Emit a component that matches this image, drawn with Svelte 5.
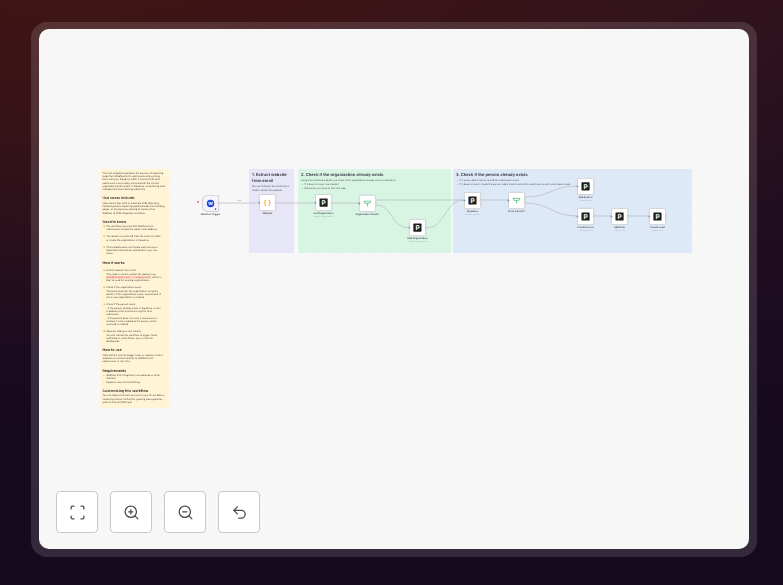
<script lang="ts">
	// canvas zoom of the flow view, coordinates below are in screen px
	const S = 0.17;
	const OX = 39;
	const OY = 29;

	const groups = [
		{
			cls: 'purple',
			x: 249,
			w: 45,
			title: '1. Extract website from email',
			intro: 'We use final part the email into a field to extract the website.',
			items: []
		},
		{
			cls: 'green',
			x: 298,
			w: 153,
			title: '2. Check if the organization already exists',
			intro: 'Using the extracted website, we check if the organization already exists in Pipedrive.',
			items: ['If it does not exist, we create it.', 'Otherwise, we move to the next step.']
		},
		{
			cls: 'blue',
			x: 453,
			w: 239,
			title: '3. Check if the person already exists',
			intro: '',
			items: [
				'If it exists, add a note to record the submission event.',
				'If it does not exist, create the person, add a note to record the submission event, and create a lead.'
			]
		}
	];

	const nodes = [
		{ x: 202, y: 195, kind: 'webflow', label: 'Webflow Trigger', sub: '' },
		{ x: 259, y: 194, kind: 'code', label: 'Website', sub: '' },
		{ x: 315, y: 194, kind: 'pipe', label: 'Get Organization', sub: 'search: organization' },
		{ x: 359, y: 195, kind: 'if', label: 'Organization Exists?', sub: '' },
		{ x: 409, y: 219, kind: 'pipe', label: 'Add Organization', sub: 'create: organization' },
		{ x: 464, y: 192, kind: 'pipe', label: 'Pipedrive', sub: 'search: person' },
		{ x: 508, y: 192, kind: 'if', label: 'Person Exists?', sub: '' },
		{ x: 577, y: 178, kind: 'pipe', label: 'Add Deals 2', sub: 'create: note' },
		{ x: 577, y: 208, kind: 'pipe', label: 'Create Person', sub: 'create: person' },
		{ x: 611, y: 208, kind: 'pipe', label: 'Add Note', sub: 'create: note' },
		{ x: 649, y: 208, kind: 'pipe', label: 'Create Lead', sub: 'create: lead' }
	];

	const edges = [
		'M219 203 H259',
		'M276 203 H315',
		'M332 203 H359',
		'M376 200 C400 200 440 200 464 200',
		'M376 205 C394 205 390 228 409 228',
		'M426 228 C446 228 444 200 464 200',
		'M481 200 H508',
		'M525 197 C550 197 552 186 577 186',
		'M525 203 C550 203 552 216 577 216',
		'M594 216 H611',
		'M628 216 H649'
	];

	const flowX = (x: number) => (x - OX) / S;
	const flowY = (y: number) => (y - OY) / S;
</script>

<div class="page">
	<div class="frame">
		<div class="canvas">
			<div class="flow">
				<div class="sticky">
					<p>This n8n template automates the process of capturing leads from Webflow form submissions and syncing them with your Pipedrive CRM. It ensures that each submission is accurately enriched with the correct organization and contact in Pipedrive, streamlining lead management and matching lead entry.</p>
					<h2>Use cases include:</h2>
					<p>Sales teams that want to automate CRM data entry, marketing teams capturing qualified leads from landing pages, or any business looking to improve their Webflow to CRM integration workflow.</p>
					<h2>Good to know</h2>
					<ol>
						<li>The workflow assumes that Webflow form submissions include the lead's email address.</li>
						<li>The domain is extracted from the email to match or create the organization in Pipedrive.</li>
						<li>This template does not handle lead scoring or duplication and can be extended for your use cases.</li>
					</ol>
					<h2>How it works</h2>
					<ol class="works">
						<li>Extract website from email<br />This code is used to extract the domain (e.g. <code>name@company.com → company.com</code>), which is later to used for existing organizations.</li>
						<li>Check if the organization exists<br />This block looks for the organization using the domain. If the organization exists, we proceed. If not, a new organization is created.</li>
						<li>Check if the person exists<br />- If the person already exists in Pipedrive, a note is added to their activities to log the form submission.<br />- If the person does not exist, a new person is created, a note is added to the person, and a new lead is created.</li>
						<li>Optional: add your own actions<br />You can extend this workflow to trigger Slack notifications, email follow-ups, or internal dashboards.</li>
					</ol>
					<h2>How to use</h2>
					<p>Start with the manual trigger node, or replace it with a webhook to connect directly to Webflow form submissions in real-time.</p>
					<h2>Requirements</h2>
					<ul>
						<li>Webflow form integration (via webhook or other method)</li>
						<li>Pipedrive account and API key</li>
					</ul>
					<h2>Customising this workflow</h2>
					<p>You can add enrichment services to your fill out data or conduct priorities. Perfect for growing sales pipelines without manual CRM input.</p>
				</div>

				{#each groups as g}
					<div class="group {g.cls}" style="left: {flowX(g.x)}px; width: {g.w / S}px">
						<h3>{g.title}</h3>
						{#if g.intro}<p>{g.intro}</p>{/if}
						{#if g.items.length}
							<ul>
								{#each g.items as item}<li>{item}</li>{/each}
							</ul>
						{/if}
					</div>
				{/each}

				<svg class="edges" viewBox="39 29 710 520" aria-hidden="true">
					{#each edges as d}
						<path {d} />
					{/each}
					<text class="edge-tag" x="239" y="201" text-anchor="middle">1 item</text>
					<text class="star" x="196.5" y="205">*</text>
				</svg>

				{#each nodes as n}
					<div class="node {n.kind}" style="left: {flowX(n.x)}px; top: {flowY(n.y)}px">
						<div class="box">
							{#if n.kind !== 'webflow'}<span class="port in"></span>{/if}
							<span class="port out"></span>
							{#if n.kind === 'pipe'}
								<span class="pipe-logo">P</span>
							{:else if n.kind === 'code'}
								<span class="braces">{'{ }'}</span>
							{:else if n.kind === 'if'}
								<svg class="if-icon" viewBox="0 0 10 8" aria-hidden="true">
									<path d="M1 1.5 H9 L7.6 3.8 H2.4 Z M5 3.8 V7.5" />
								</svg>
							{:else}
								<span class="wf-logo">w</span>
								<span class="wf-dot"></span>
							{/if}
						</div>
						<span class="label">{n.label}</span>
						{#if n.sub}<span class="sub">{n.sub}</span>{/if}
					</div>
				{/each}
			</div>

			<div class="controls">
				<button aria-label="Fit view">
					<svg viewBox="0 0 24 24"><path d="M7 3H5a2 2 0 0 0-2 2v2M21 7V5a2 2 0 0 0-2-2h-2M3 17v2a2 2 0 0 0 2 2h2M17 21h2a2 2 0 0 0 2-2v-2" /></svg>
				</button>
				<button aria-label="Zoom in">
					<svg viewBox="0 0 24 24"><circle cx="11" cy="11" r="8" /><path d="M21 21l-4.3-4.3M11 8v6M8 11h6" /></svg>
				</button>
				<button aria-label="Zoom out">
					<svg viewBox="0 0 24 24"><circle cx="11" cy="11" r="8" /><path d="M21 21l-4.3-4.3M8 11h6" /></svg>
				</button>
				<button aria-label="Undo">
					<svg viewBox="0 0 24 24"><path d="M9 14L4 9l5-5" /><path d="M4 9h10.5a5.5 5.5 0 0 1 0 11H11" /></svg>
				</button>
			</div>
		</div>
	</div>
</div>

<style>
	:global(body) {
		margin: 0;
		font-family: Inter, 'Liberation Sans', sans-serif;
	}

	.page {
		width: 783px;
		height: 585px;
		box-sizing: border-box;
		padding: 22px 26px 28px 31px;
		overflow: hidden;
		background:
			radial-gradient(ellipse 900px 420px at 10% -10%, #421512 0%, rgba(66, 21, 18, 0) 100%),
			linear-gradient(180deg, #2c1220 0%, #170a1f 70%, #150a1e 100%);
	}

	.frame {
		height: 100%;
		box-sizing: border-box;
		padding: 7px 8px 8px;
		border-radius: 16px;
		background: rgba(255, 255, 255, 0.13);
	}

	.canvas {
		position: relative;
		height: 100%;
		border-radius: 10px;
		overflow: hidden;
		background-color: #f7f7f7;
		background-image: repeating-linear-gradient(135deg, #f5f5f5 0 1px, #f8f8f8 1px 3px);
	}

	/* everything on the flow is sized at 100% and zoomed out like the real canvas */
	.flow {
		position: absolute;
		left: 0;
		top: 0;
		width: 4176px;
		height: 3059px;
		transform: scale(0.17);
		transform-origin: 0 0;
		text-rendering: geometricPrecision;
		filter: blur(1.2px);
	}

	.sticky {
		position: absolute;
		left: 359px;
		top: 824px;
		width: 406px;
		height: 1406px;
		box-sizing: border-box;
		padding: 12px 22px 0 14px;
		border-radius: 8px;
		background: #fff5d6;
		color: #4a453f;
		font-size: 14px;
		line-height: 19.5px;
	}

	.sticky p {
		margin: 0;
	}

	.sticky h2 {
		margin: 30px 0 4px;
		color: #2e2a26;
		font-size: 21px;
		line-height: 26px;
		font-weight: 600;
	}

	.sticky ol,
	.sticky ul {
		margin: 0;
		padding: 0 22px 0 22px;
	}

	.sticky ol.works {
		margin-top: 24px;
	}

	.sticky li {
		margin-bottom: 22px;
	}

	.sticky ul li {
		margin-bottom: 2px;
	}

	.sticky code {
		color: #e0553f;
		background: #fbd9c8;
		font-family: inherit;
	}

	.group {
		position: absolute;
		top: 824px;
		height: 494px;
		box-sizing: border-box;
		padding: 18px 18px;
		border-radius: 8px;
		color: #50505a;
		font-size: 14px;
		line-height: 23px;
	}

	.group.purple {
		background: #e7e6f6;
	}

	.group.green {
		background: #d8f5e4;
	}

	.group.blue {
		background: #dee9f8;
	}

	.group h3 {
		margin: 0 0 6px;
		color: #33333d;
		font-size: 24px;
		line-height: 33px;
		font-weight: 600;
	}

	.group p {
		margin: 0;
	}

	.group ul {
		margin: 0;
		padding-left: 20px;
	}

	.edges {
		position: absolute;
		inset: 0;
		width: 100%;
		height: 100%;
	}

	.edges path {
		fill: none;
		stroke: #b8b8bc;
		stroke-width: 0.7;
	}

	.edge-tag {
		fill: #9a9aa0;
		font-size: 2px;
	}

	.star {
		fill: #e8604c;
		font-size: 6px;
	}

	.node {
		position: absolute;
		width: 100px;
		display: flex;
		flex-direction: column;
		align-items: center;
	}

	.box {
		position: relative;
		box-sizing: border-box;
		width: 100px;
		height: 100px;
		display: flex;
		align-items: center;
		justify-content: center;
		background: #fff;
		border: 4px solid #bdbdbd;
		border-radius: 8px;
	}

	.webflow .box {
		border-radius: 36px 8px 8px 36px;
		background: #f4f4ff;
	}

	.port {
		position: absolute;
		top: 50%;
		width: 12px;
		height: 12px;
		margin-top: -6px;
		border-radius: 50%;
		background: #fff;
		border: 2px solid #9a9a9a;
		box-sizing: border-box;
	}

	.port.in {
		left: -8px;
		background: #9a9a9a;
	}

	.port.out {
		right: -8px;
	}

	.pipe-logo {
		width: 48px;
		height: 48px;
		display: flex;
		align-items: center;
		justify-content: center;
		border-radius: 4px;
		background: #1f1f1f;
		color: #fff;
		font-size: 38px;
		line-height: 1;
		font-weight: 700;
	}

	.braces {
		color: #f0a030;
		font-size: 40px;
		line-height: 1;
		font-weight: 600;
	}

	.if-icon {
		width: 52px;
		height: 42px;
	}

	.if-icon path {
		fill: none;
		stroke: #3fb56e;
		stroke-width: 0.8;
	}

	.wf-logo {
		width: 44px;
		height: 44px;
		display: flex;
		align-items: center;
		justify-content: center;
		border-radius: 50%;
		background: #2348d8;
		color: #fff;
		font-size: 32px;
		line-height: 0.8;
		font-weight: 700;
	}

	.wf-dot {
		position: absolute;
		right: 12px;
		bottom: 8px;
		width: 9px;
		height: 9px;
		background: #2348d8;
		border-radius: 50%;
	}

	.label {
		margin-top: 6px;
		white-space: nowrap;
		color: #33333a;
		font-size: 14.5px;
		line-height: 18px;
		font-weight: 500;
	}

	.sub {
		white-space: nowrap;
		color: #a8a8b0;
		font-size: 12px;
		line-height: 16px;
	}

	.controls {
		position: absolute;
		left: 17px;
		bottom: 16px;
		display: flex;
		gap: 12px;
	}

	.controls button {
		width: 42px;
		height: 42px;
		padding: 0;
		display: flex;
		align-items: center;
		justify-content: center;
		background: #fff;
		border: 1px solid #c9c9c9;
		border-radius: 4px;
	}

	.controls svg {
		width: 17px;
		height: 17px;
		fill: none;
		stroke: #4a4a4a;
		stroke-width: 1.8;
		stroke-linecap: round;
		stroke-linejoin: round;
	}
</style>
